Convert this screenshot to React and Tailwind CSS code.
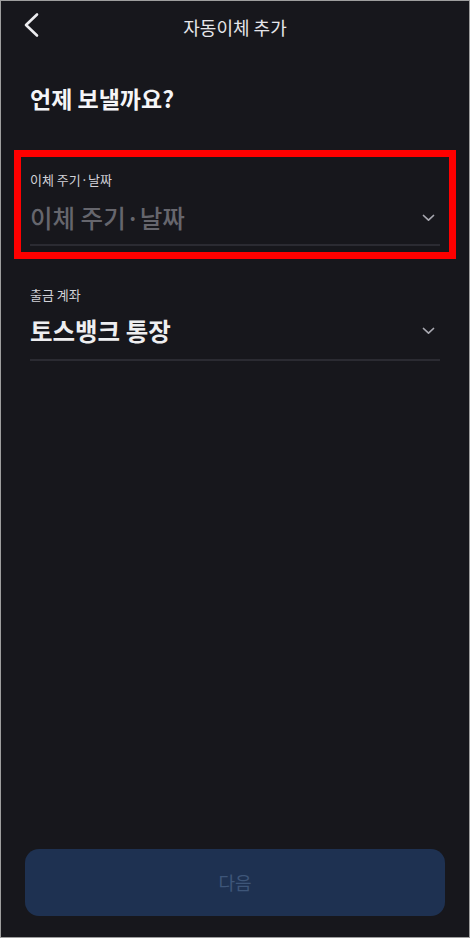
export default function App() {
  return (
    <div className="w-[470px] h-[938px] border border-[#9e9e9e] bg-[#17171c] flex flex-col font-['Noto_Sans_CJK_KR','Noto_Sans',sans-serif]">
      <header className="h-[52px] relative flex items-center justify-center">
        <button className="absolute left-[22px] top-[11px] p-0">
          <svg width="16" height="26" viewBox="0 0 16 26" fill="none">
            <path d="M14 2.5 L3 13 L14 23.5" stroke="#ececef" strokeWidth="2.6" strokeLinecap="round" strokeLinejoin="round" />
          </svg>
        </button>
        <span className="text-[18px] leading-[24px] text-[#e6e6ea]">자동이체 추가</span>
      </header>

      <h1 className="mt-[29px] px-[29px] text-[23px] leading-[32px] font-bold text-[#f5f5f7]">언제 보낼까요?</h1>

      <section className="mt-[36px] mx-[13px] border-[7px] border-[#ff0000] px-[9px] pt-[13px] pb-[6px]">
        <p className="text-[13px] leading-[20px] text-[#d2d2d8]">이체 주기·날짜</p>
        <div className="mt-[12px] pb-[10px] flex items-center justify-between border-b-2 border-[#2b2b32]">
          <span className="text-[24.5px] leading-[32px] font-medium text-[#66666d]">이체 주기·날짜</span>
          <Chevron />
        </div>
      </section>

      <section className="mt-[26px] px-[29px]">
        <p className="text-[13px] leading-[20px] text-[#d2d2d8]">출금 계좌</p>
        <div className="mt-[10px] pb-[12px] flex items-center justify-between border-b-2 border-[#2b2b32]">
          <span className="text-[24.5px] leading-[32px] font-bold text-[#eeeef0]">토스뱅크 통장</span>
          <Chevron />
        </div>
      </section>

      <div className="flex-1" />

      <button className="mx-[24px] mb-[21px] h-[67px] rounded-[14px] bg-[#1e3151] text-[18px] text-[#3e5679]">
        다음
      </button>
    </div>
  );
}

function Chevron() {
  return (
    <svg className="mr-[5px]" width="13" height="8" viewBox="0 0 13 8" fill="none">
      <path d="M1.5 1.5 L6.5 6.2 L11.5 1.5" stroke="#a8a8b0" strokeWidth="1.7" strokeLinecap="round" strokeLinejoin="round" />
    </svg>
  );
}
